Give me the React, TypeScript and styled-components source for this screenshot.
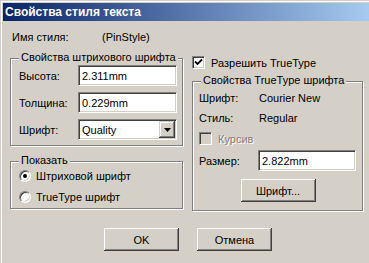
import styled, { createGlobalStyle } from "styled-components";

const GlobalStyle = createGlobalStyle`
  html, body {
    margin: 0;
    padding: 0;
    overflow: hidden;
    background: #d4d0c8;
  }
  body {
    font-family: "Liberation Sans", Arial, sans-serif;
    font-size: 11px;
    color: #000;
  }
`;

const Window = styled.div`
  width: 369px;
  height: 263px;
  box-sizing: border-box;
  padding: 3px 0 0 3px;
  background: #d4d0c8;
  box-shadow: inset 1px 1px 0 #d4d0c8, inset 2px 2px 0 #fff;
  overflow: hidden;
`;

const TitleBar = styled.div`
  height: 18px;
  display: flex;
  align-items: center;
  padding-left: 2px;
  background: linear-gradient(to right, #0a246a, #a6caf0);
  color: #fff;
  font-weight: bold;
  font-size: 12px;
  white-space: nowrap;
`;

const Body = styled.div`
  display: flex;
  gap: 9px;
  padding-left: 7px;
`;

const Column = styled.div<{ $width: number }>`
  display: flex;
  flex-direction: column;
  width: ${(p) => p.$width}px;
`;

const NameRow = styled.div`
  display: flex;
  margin-top: 10px;
  padding-left: 2px;
  line-height: 13px;
`;

const Group = styled.div<{ $mt: number; $pad: string }>`
  position: relative;
  margin-top: ${(p) => p.$mt}px;
  padding: ${(p) => p.$pad};
  border: 1px solid #808080;
  box-shadow: inset 1px 1px 0 #fff, 1px 1px 0 #fff;
  display: flex;
  flex-direction: column;
`;

const Caption = styled.span`
  position: absolute;
  top: -8px;
  left: 8px;
  padding: 0 2px;
  line-height: 13px;
  background: #d4d0c8;
  white-space: nowrap;
`;

const FieldRow = styled.div<{ $mt?: number }>`
  display: flex;
  align-items: center;
  height: 21px;
  margin-top: ${(p) => p.$mt ?? 0}px;
`;

const InfoRow = styled.div<{ $mt?: number }>`
  display: flex;
  align-items: center;
  height: 13px;
  margin-top: ${(p) => p.$mt ?? 0}px;
`;

const Label = styled.span<{ $width: number }>`
  width: ${(p) => p.$width}px;
  flex: none;
  white-space: nowrap;
`;

const Field = styled.div<{ $width: number }>`
  width: ${(p) => p.$width}px;
  height: 21px;
  box-sizing: border-box;
  display: flex;
  align-items: center;
  justify-content: space-between;
  padding-left: 3px;
  background: #fff;
  border-style: solid;
  border-width: 1px;
  border-color: #808080 #fff #fff #808080;
  box-shadow: inset 1px 1px 0 #404040, inset -1px -1px 0 #d4d0c8;
`;

const DropButton = styled.span`
  width: 16px;
  height: 17px;
  margin-right: 1px;
  box-sizing: border-box;
  display: flex;
  align-items: center;
  justify-content: center;
  background: #d4d0c8;
  box-shadow: inset -1px -1px 0 #404040, inset 1px 1px 0 #d4d0c8,
    inset -2px -2px 0 #808080, inset 2px 2px 0 #fff;
`;

const OptionRow = styled.div`
  display: flex;
  align-items: center;
  gap: 5px;
  height: 21px;
`;

const CheckRow = styled.div<{ $mt: number }>`
  display: flex;
  align-items: center;
  gap: 6px;
  height: 13px;
  margin-top: ${(p) => p.$mt}px;
`;

const Box = styled.span<{ $disabled?: boolean }>`
  width: 13px;
  height: 13px;
  flex: none;
  box-sizing: border-box;
  display: flex;
  align-items: center;
  justify-content: center;
  background: ${(p) => (p.$disabled ? "#d4d0c8" : "#fff")};
  border-style: solid;
  border-width: 1px;
  border-color: #808080 #fff #fff #808080;
  box-shadow: inset 1px 1px 0 #404040, inset -1px -1px 0 #d4d0c8;
`;

const Radio = styled.span<{ $on?: boolean }>`
  position: relative;
  width: 12px;
  height: 12px;
  flex: none;
  box-sizing: border-box;
  border-radius: 50%;
  background: #fff;
  border: 1px solid;
  border-color: #808080 #fff #fff #808080;
  box-shadow: inset 1px 1px 0 #404040, inset -1px -1px 0 #d4d0c8;
  &::after {
    content: "";
    display: ${(p) => (p.$on ? "block" : "none")};
    position: absolute;
    left: 3px;
    top: 3px;
    width: 4px;
    height: 4px;
    border-radius: 50%;
    background: #000;
  }
`;

const Muted = styled.span`
  color: #808080;
  text-shadow: 1px 1px 0 #fff;
`;

const Button = styled.div<{ $width: number }>`
  width: ${(p) => p.$width}px;
  height: 23px;
  box-sizing: border-box;
  display: flex;
  align-items: center;
  justify-content: center;
  background: #d4d0c8;
  box-shadow: inset -1px -1px 0 #404040, inset 1px 1px 0 #fff,
    inset -2px -2px 0 #808080, inset 2px 2px 0 #d4d0c8;
`;

const Centered = styled.div`
  display: flex;
  justify-content: center;
  margin-top: 8px;
`;

const Buttons = styled.div`
  display: flex;
  gap: 18px;
  margin-top: 17px;
  padding-left: 101px;
`;

function Check() {
  return (
    <svg width="9" height="9" viewBox="0 0 9 9">
      <path d="M1 3.5 L3.5 6 L8 1.5" fill="none" stroke="#000" strokeWidth="1.8" />
    </svg>
  );
}

export default function App() {
  return (
    <>
      <GlobalStyle />
      <Window>
        <TitleBar>Свойства стиля текста</TitleBar>
        <Body>
          <Column $width={173}>
            <NameRow>
              <Label $width={90}>Имя стиля:</Label>
              <span>(PinStyle)</span>
            </NameRow>
            <Group $mt={14} $pad="6px 4px 5px 8px">
              <Caption>Свойства штрихового шрифта</Caption>
              <FieldRow>
                <Label $width={59}>Высота:</Label>
                <Field $width={99}>2.311mm</Field>
              </FieldRow>
              <FieldRow $mt={6}>
                <Label $width={59}>Толщина:</Label>
                <Field $width={99}>0.229mm</Field>
              </FieldRow>
              <FieldRow $mt={6}>
                <Label $width={59}>Шрифт:</Label>
                <Field $width={99}>
                  Quality
                  <DropButton>
                    <svg width="7" height="4" viewBox="0 0 7 4">
                      <path d="M0 0 H7 L3.5 4 Z" fill="#000" />
                    </svg>
                  </DropButton>
                </Field>
              </FieldRow>
            </Group>
            <Group $mt={15} $pad="3px 4px 1px 8px">
              <Caption>Показать</Caption>
              <OptionRow>
                <Radio $on />
                Штриховой шрифт
              </OptionRow>
              <OptionRow>
                <Radio />
                TrueType шрифт
              </OptionRow>
            </Group>
          </Column>
          <Column $width={171}>
            <CheckRow $mt={35}>
              <Box>
                <Check />
              </Box>
              Разрешить TrueType
            </CheckRow>
            <Group $mt={12} $pad="9px 5px 8px 6px">
              <Caption>Свойства TrueType шрифта</Caption>
              <InfoRow>
                <Label $width={60}>Шрифт:</Label>
                Courier New
              </InfoRow>
              <InfoRow $mt={7}>
                <Label $width={60}>Стиль:</Label>
                Regular
              </InfoRow>
              <CheckRow $mt={8}>
                <Box $disabled />
                <Muted>Курсив</Muted>
              </CheckRow>
              <FieldRow $mt={5}>
                <Label $width={59}>Размер:</Label>
                <Field $width={98}>2.822mm</Field>
              </FieldRow>
              <Centered>
                <Button $width={75}>Шрифт...</Button>
              </Centered>
            </Group>
          </Column>
        </Body>
        <Buttons>
          <Button $width={75}>OK</Button>
          <Button $width={75}>Отмена</Button>
        </Buttons>
      </Window>
    </>
  );
}
